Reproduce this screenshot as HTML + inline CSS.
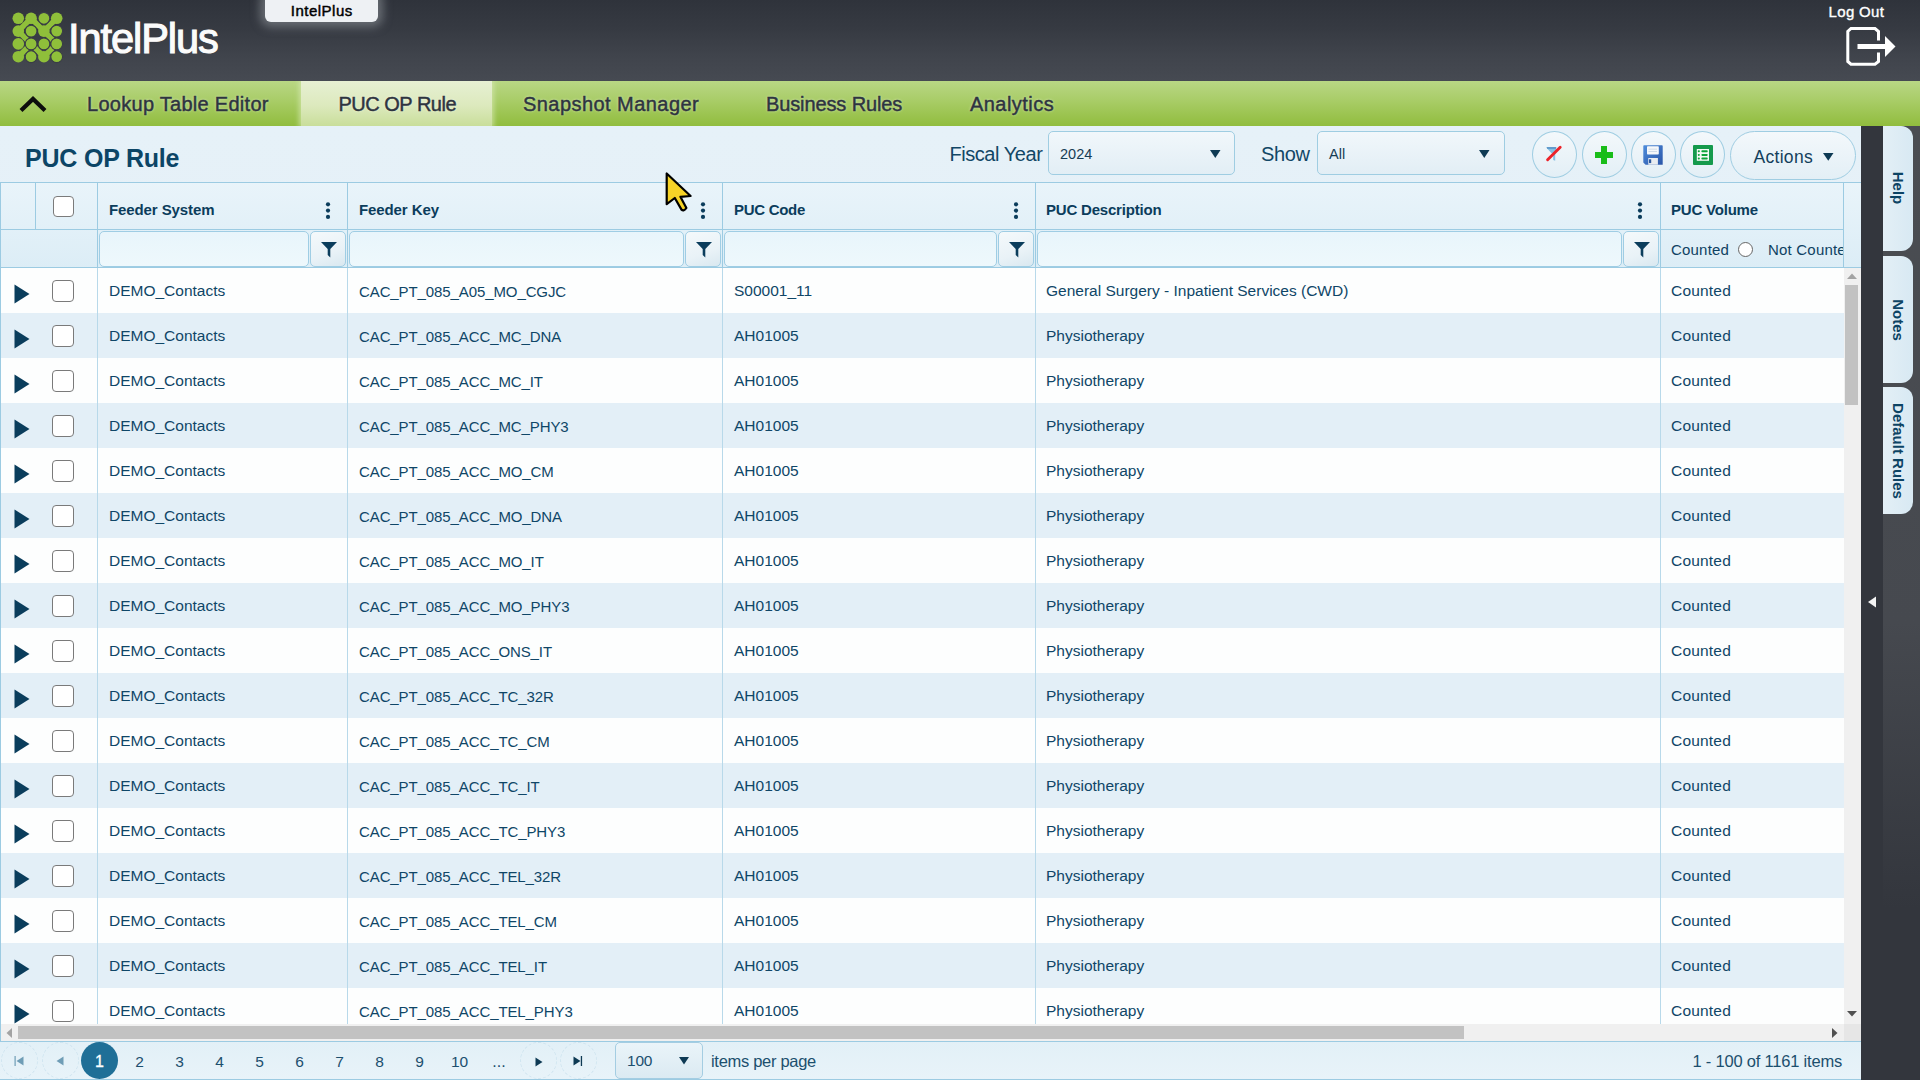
<!DOCTYPE html>
<html><head><meta charset="utf-8"><title>PUC OP Rule</title>
<style>
html,body{margin:0;padding:0;width:1920px;height:1080px;overflow:hidden;background:#e3eff6;font-family:'Liberation Sans', sans-serif}
.t{position:absolute;line-height:0;white-space:nowrap;font-family:'Liberation Sans', sans-serif}
</style></head><body>
<div style='position:absolute;left:0px;top:0px;width:1920px;height:81px;background:linear-gradient(#2f333b 0%,#363a42 35%,#40444c 70%,#464a52 100%)'></div><svg style='position:absolute;left:10px;top:10px' width='56' height='56' viewBox='10 10 56 56'><line x1='31.1' y1='18.3' x2='18.3' y2='31.1' stroke='#8fbf3a' stroke-width='5.5'/><line x1='31.1' y1='18.3' x2='43.9' y2='31.1' stroke='#8fbf3a' stroke-width='5.5'/><line x1='43.9' y1='31.1' x2='56.7' y2='18.3' stroke='#8fbf3a' stroke-width='5.5'/><line x1='18.3' y1='31.1' x2='31.1' y2='43.9' stroke='#8fbf3a' stroke-width='5.5'/><line x1='43.9' y1='31.1' x2='56.7' y2='43.9' stroke='#8fbf3a' stroke-width='5.5'/><line x1='18.3' y1='56.7' x2='31.1' y2='43.9' stroke='#8fbf3a' stroke-width='5.5'/><line x1='31.1' y1='43.9' x2='43.9' y2='56.7' stroke='#8fbf3a' stroke-width='5.5'/><line x1='43.9' y1='56.7' x2='56.7' y2='43.9' stroke='#8fbf3a' stroke-width='5.5'/><circle cx='18.3' cy='18.3' r='5.8' fill='#8fbf3a'/><circle cx='31.1' cy='18.3' r='5.8' fill='#8fbf3a'/><circle cx='43.9' cy='18.3' r='5.9' fill='#8fbf3a' stroke='#3a3e46' stroke-width='1.1'/><circle cx='56.7' cy='18.3' r='5.8' fill='#8fbf3a'/><circle cx='18.3' cy='31.1' r='5.8' fill='#8fbf3a'/><circle cx='31.1' cy='31.1' r='5.9' fill='#8fbf3a' stroke='#3a3e46' stroke-width='1.1'/><circle cx='43.9' cy='31.1' r='5.8' fill='#8fbf3a'/><circle cx='56.7' cy='31.1' r='5.9' fill='#8fbf3a' stroke='#3a3e46' stroke-width='1.1'/><circle cx='18.3' cy='43.9' r='5.8' fill='#8fbf3a'/><circle cx='31.1' cy='43.9' r='5.9' fill='#8fbf3a' stroke='#3a3e46' stroke-width='1.1'/><circle cx='43.9' cy='43.9' r='5.9' fill='#8fbf3a' stroke='#3a3e46' stroke-width='1.1'/><circle cx='56.7' cy='43.9' r='5.9' fill='#8fbf3a' stroke='#3a3e46' stroke-width='1.1'/><circle cx='18.3' cy='56.7' r='5.8' fill='#8fbf3a'/><circle cx='31.1' cy='56.7' r='5.9' fill='#8fbf3a' stroke='#3a3e46' stroke-width='1.1'/><circle cx='43.9' cy='56.7' r='5.8' fill='#8fbf3a'/><circle cx='56.7' cy='56.7' r='5.9' fill='#8fbf3a' stroke='#3a3e46' stroke-width='1.1'/></svg><div class='t' style='left:67.5px;top:38.9px;font-size:42px;color:#fbfbfb;font-weight:normal;letter-spacing:-1.1px;-webkit-text-stroke:1.1px #fbfbfb;transform:scaleX(0.99);transform-origin:0 0'>IntelPlus</div><div style='position:absolute;left:265px;top:-6px;width:113px;height:28px;background:#eef1f4;border-radius:6px;box-shadow:0 0 10px 5px rgba(150,155,160,0.55)'></div><div class='t' style='left:21.80000000000001px;width:600px;text-align:center;top:11.4px;font-size:15px;color:#000;font-weight:normal;letter-spacing:0.5px;-webkit-text-stroke:0.45px #000'>IntelPlus</div><div class='t' style='left:1828.5px;top:11.8px;font-size:15px;color:#fff;font-weight:normal;letter-spacing:0.35px;-webkit-text-stroke:0.35px #fff'>Log Out</div><svg style='position:absolute;left:1840px;top:22px' width='60' height='50' viewBox='1840 22 60 50'><path d='M1878.5,40.5 V31.5 L1875,28.5 H1851 L1847.8,31.5 V61.5 L1851,64.2 H1875 L1878.5,61.5 V52.5' fill='none' stroke='#fff' stroke-width='3'/><rect x='1857.5' y='44' width='28' height='5' fill='#fff'/><path d='M1885,36 L1895.5,46.5 L1885,57 Z' fill='#fff'/></svg><div style='position:absolute;left:0px;top:81px;width:1920px;height:45px;background:linear-gradient(#b9d785 0%,#a8cc66 45%,#91bd3e 100%)'></div><div style='position:absolute;left:0;top:81px;width:1920px;height:45px;overflow:hidden'><div style='position:absolute;left:301px;top:0px;width:191px;height:45px;background:linear-gradient(#e7f0d3 0%,#dce9bd 55%,#c9de9a 100%);box-shadow:0 0 5px 2px rgba(215,232,180,0.7)'></div></div><svg style='position:absolute;left:17px;top:93px' width='32' height='22' viewBox='0 0 32 22'><path d='M4,17.5 L16,6 L28,17.5' fill='none' stroke='#0d0d0d' stroke-width='4.2'/></svg><div class='t' style='left:87px;top:103.6px;font-size:20px;color:#2e3440;font-weight:normal;letter-spacing:0.28px;text-shadow:0 0 3px rgba(255,255,255,0.6);-webkit-text-stroke:0.45px #2e3440'>Lookup Table Editor</div><div class='t' style='left:338.5px;top:103.6px;font-size:20px;color:#2e3440;font-weight:normal;letter-spacing:-0.5px;text-shadow:0 0 3px rgba(255,255,255,0.6);-webkit-text-stroke:0.45px #2e3440'>PUC OP Rule</div><div class='t' style='left:523px;top:103.6px;font-size:20px;color:#2e3440;font-weight:normal;letter-spacing:0.45px;text-shadow:0 0 3px rgba(255,255,255,0.6);-webkit-text-stroke:0.45px #2e3440'>Snapshot Manager</div><div class='t' style='left:766px;top:103.6px;font-size:20px;color:#2e3440;font-weight:normal;letter-spacing:-0.12px;text-shadow:0 0 3px rgba(255,255,255,0.6);-webkit-text-stroke:0.45px #2e3440'>Business Rules</div><div class='t' style='left:970px;top:103.6px;font-size:20px;color:#2e3440;font-weight:normal;letter-spacing:0.45px;text-shadow:0 0 3px rgba(255,255,255,0.6);-webkit-text-stroke:0.45px #2e3440'>Analytics</div><div style='position:absolute;left:0px;top:126px;width:1861px;height:954px;background:linear-gradient(#e6f1f8 0%,#dfecf4 100%)'></div><div class='t' style='left:25px;top:157.8px;font-size:25px;color:#0c4566;font-weight:bold;letter-spacing:-0.2px'>PUC OP Rule</div><div class='t' style='left:949.5px;top:153.6px;font-size:20px;color:#124766;font-weight:normal;letter-spacing:-0.45px'>Fiscal Year</div><div style='position:absolute;left:1048px;top:131px;width:187px;height:44px;box-sizing:border-box;border:1px solid #9fcde2;border-radius:5px;background:linear-gradient(#f1f7fb,#e2eef5)'></div><div class='t' style='left:1060px;top:153.8px;font-size:14.5px;color:#173d55;font-weight:normal;'>2024</div><svg style='position:absolute;left:1210px;top:150px' width='11' height='8'><path d='M0,0 H10.5 L5.25,8 Z' fill='#0e3a54'/></svg><div class='t' style='left:1261px;top:153.6px;font-size:20px;color:#124766;font-weight:normal;letter-spacing:-0.4px'>Show</div><div style='position:absolute;left:1317px;top:131px;width:188px;height:44px;box-sizing:border-box;border:1px solid #9fcde2;border-radius:5px;background:linear-gradient(#f1f7fb,#e2eef5)'></div><div class='t' style='left:1329px;top:153.8px;font-size:14.5px;color:#173d55;font-weight:normal;'>All</div><svg style='position:absolute;left:1479px;top:150px' width='11' height='8'><path d='M0,0 H10.5 L5.25,8 Z' fill='#0e3a54'/></svg><div style='position:absolute;left:1532.0px;top:131px;width:45px;height:47px;box-sizing:border-box;border:1px solid #9fcde2;border-radius:50%;background:linear-gradient(#f3f8fb,#e3eff6)'></div><div style='position:absolute;left:1581.5px;top:131px;width:45px;height:47px;box-sizing:border-box;border:1px solid #9fcde2;border-radius:50%;background:linear-gradient(#f3f8fb,#e3eff6)'></div><div style='position:absolute;left:1630.8px;top:131px;width:45px;height:47px;box-sizing:border-box;border:1px solid #9fcde2;border-radius:50%;background:linear-gradient(#f3f8fb,#e3eff6)'></div><div style='position:absolute;left:1680.1px;top:131px;width:45px;height:47px;box-sizing:border-box;border:1px solid #9fcde2;border-radius:50%;background:linear-gradient(#f3f8fb,#e3eff6)'></div><svg style='position:absolute;left:1540px;top:140px' width='30' height='30' viewBox='1540 140 30 30'><path d='M1546,147.3 H1556.6 L1555.2,153.3 V160.8 L1553.2,160 V153.3 L1551.5,153.3 Z' fill='#86bfe2'/><rect x='1547' y='147.3' width='9' height='1.3' fill='#4a86c0'/><line x1='1547.6' y1='159.8' x2='1560.2' y2='147.3' stroke='#ec2229' stroke-width='2.9' stroke-linecap='round'/></svg><svg style='position:absolute;left:1595px;top:146px' width='18' height='18' viewBox='0 0 18 18'><path d='M6,0 H12 V6 H18 V12 H12 V18 H6 V12 H0 V6 H6 Z' fill='#19bd19'/></svg><svg style='position:absolute;left:1643px;top:145px' width='20' height='20' viewBox='0 0 20 20'><defs><linearGradient id='fg' x1='0' y1='0' x2='1' y2='1'><stop offset='0' stop-color='#4f8ddb'/><stop offset='1' stop-color='#2a55a8'/></linearGradient></defs><path d='M0.3,1 Q0.3,0.3 1,0.3 H19 Q19.7,0.3 19.7,1 V19.7 H2.6 L0.3,17.4 Z' fill='url(#fg)'/><rect x='4' y='1.2' width='11.8' height='8.4' rx='0.8' fill='#f6f8fa'/><rect x='5.5' y='3.8' width='8.5' height='0.6' fill='#b8c8dc'/><rect x='5.5' y='6' width='8.5' height='0.6' fill='#b8c8dc'/><rect x='5.3' y='13' width='9.6' height='6.7' fill='#e9edf1'/><rect x='6' y='14.3' width='2.2' height='3.8' fill='#2d5aa0'/></svg><svg style='position:absolute;left:1693px;top:145px' width='20' height='20' viewBox='0 0 20 20'><rect x='0' y='0' width='20' height='20' rx='1' fill='#159a4c'/><rect x='3.8' y='4' width='12.2' height='11.8' fill='#f4faf5'/><rect x='4.8' y='5.3' width='2' height='2' rx='0.8' fill='#0ea43a'/><rect x='8.4' y='5.3' width='6.3' height='2' rx='0.8' fill='#0ea43a'/><rect x='4.8' y='8.9' width='2' height='2' rx='0.8' fill='#0ea43a'/><rect x='8.4' y='8.9' width='6.3' height='2' rx='0.8' fill='#0ea43a'/><rect x='4.8' y='12.5' width='2' height='2' rx='0.8' fill='#0ea43a'/><rect x='8.4' y='12.5' width='6.3' height='2' rx='0.8' fill='#0ea43a'/></svg><div style='position:absolute;left:1730px;top:131px;width:126px;height:49px;box-sizing:border-box;border:1px solid #9fcde2;border-radius:25px;background:linear-gradient(#f3f8fb,#e3eff6)'></div><div class='t' style='left:1753.5px;top:156.6px;font-size:17.5px;color:#133f5c;font-weight:normal;letter-spacing:0.3px'>Actions</div><svg style='position:absolute;left:1823px;top:153px' width='11' height='8'><path d='M0,0 H10.5 L5.25,7.8 Z' fill='#0e3a54'/></svg><div style='position:absolute;left:0px;top:182px;width:1861px;height:86px;background:linear-gradient(#e9f4fa 0%,#dcedf6 100%)'></div><div style='position:absolute;left:0px;top:182px;width:1861px;height:1px;background:#9ccbe2'></div><div style='position:absolute;left:0px;top:229px;width:1861px;height:1px;background:#9ccbe2'></div><div style='position:absolute;left:0px;top:267px;width:1861px;height:1px;background:#9ccbe2'></div><div style='position:absolute;left:0px;top:182px;width:1px;height:860px;background:#9ccbe2'></div><div style='position:absolute;left:35px;top:183px;width:1px;height:46px;background:#9ccbe2'></div><div style='position:absolute;left:97px;top:183px;width:1px;height:84px;background:#9ccbe2'></div><div style='position:absolute;left:347px;top:183px;width:1px;height:84px;background:#9ccbe2'></div><div style='position:absolute;left:722px;top:183px;width:1px;height:84px;background:#9ccbe2'></div><div style='position:absolute;left:1035px;top:183px;width:1px;height:84px;background:#9ccbe2'></div><div style='position:absolute;left:1660px;top:183px;width:1px;height:84px;background:#9ccbe2'></div><div style='position:absolute;left:1843px;top:183px;width:1px;height:84px;background:#9ccbe2'></div><div style='position:absolute;left:53px;top:196px;width:21px;height:21px;box-sizing:border-box;border:1.5px solid #7b7b7b;border-radius:4px;background:#fff'></div><div class='t' style='left:109px;top:209.8px;font-size:15px;color:#0b3d5c;font-weight:bold;letter-spacing:-0.1px'>Feeder System</div><div class='t' style='left:359px;top:209.8px;font-size:15px;color:#0b3d5c;font-weight:bold;letter-spacing:-0.1px'>Feeder Key</div><div class='t' style='left:734px;top:209.8px;font-size:15px;color:#0b3d5c;font-weight:bold;letter-spacing:-0.3px'>PUC Code</div><div class='t' style='left:1046px;top:209.8px;font-size:15px;color:#0b3d5c;font-weight:bold;letter-spacing:-0.2px'>PUC Description</div><div class='t' style='left:1671px;top:209.8px;font-size:15px;color:#0b3d5c;font-weight:bold;letter-spacing:-0.2px'>PUC Volume</div><svg style='position:absolute;left:324.8px;top:201px' width='6' height='20' viewBox='0 0 6 20'><circle cx='3' cy='3.3' r='2.1' fill='#0b3d5c'/><circle cx='3' cy='9.6' r='2.1' fill='#0b3d5c'/><circle cx='3' cy='15.9' r='2.1' fill='#0b3d5c'/></svg><svg style='position:absolute;left:699.8px;top:201px' width='6' height='20' viewBox='0 0 6 20'><circle cx='3' cy='3.3' r='2.1' fill='#0b3d5c'/><circle cx='3' cy='9.6' r='2.1' fill='#0b3d5c'/><circle cx='3' cy='15.9' r='2.1' fill='#0b3d5c'/></svg><svg style='position:absolute;left:1012.8px;top:201px' width='6' height='20' viewBox='0 0 6 20'><circle cx='3' cy='3.3' r='2.1' fill='#0b3d5c'/><circle cx='3' cy='9.6' r='2.1' fill='#0b3d5c'/><circle cx='3' cy='15.9' r='2.1' fill='#0b3d5c'/></svg><svg style='position:absolute;left:1637px;top:201px' width='6' height='20' viewBox='0 0 6 20'><circle cx='3' cy='3.3' r='2.1' fill='#0b3d5c'/><circle cx='3' cy='9.6' r='2.1' fill='#0b3d5c'/><circle cx='3' cy='15.9' r='2.1' fill='#0b3d5c'/></svg><div style='position:absolute;left:99px;top:231px;width:210px;height:36px;box-sizing:border-box;border:1px solid #9fcde4;border-radius:5px;background:linear-gradient(#e8f5fb,#eef8fc)'></div><div style='position:absolute;left:310px;top:231px;width:36px;height:36px;box-sizing:border-box;border:1px solid #9fcde4;border-radius:5px;background:linear-gradient(160deg,#f4f9fb 0%,#e9f2f7 60%,#d9e8f0 100%)'></div><svg style='position:absolute;left:320.5px;top:242px' width='16' height='16' viewBox='0 0 16 16'><path d='M0,0 H16 L9.3,7 V15.5 L6.7,13 V7 Z' fill='#0b3d5c'/></svg><div style='position:absolute;left:349px;top:231px;width:335px;height:36px;box-sizing:border-box;border:1px solid #9fcde4;border-radius:5px;background:linear-gradient(#e8f5fb,#eef8fc)'></div><div style='position:absolute;left:685px;top:231px;width:36px;height:36px;box-sizing:border-box;border:1px solid #9fcde4;border-radius:5px;background:linear-gradient(160deg,#f4f9fb 0%,#e9f2f7 60%,#d9e8f0 100%)'></div><svg style='position:absolute;left:695.5px;top:242px' width='16' height='16' viewBox='0 0 16 16'><path d='M0,0 H16 L9.3,7 V15.5 L6.7,13 V7 Z' fill='#0b3d5c'/></svg><div style='position:absolute;left:724px;top:231px;width:273px;height:36px;box-sizing:border-box;border:1px solid #9fcde4;border-radius:5px;background:linear-gradient(#e8f5fb,#eef8fc)'></div><div style='position:absolute;left:998px;top:231px;width:36px;height:36px;box-sizing:border-box;border:1px solid #9fcde4;border-radius:5px;background:linear-gradient(160deg,#f4f9fb 0%,#e9f2f7 60%,#d9e8f0 100%)'></div><svg style='position:absolute;left:1008.5px;top:242px' width='16' height='16' viewBox='0 0 16 16'><path d='M0,0 H16 L9.3,7 V15.5 L6.7,13 V7 Z' fill='#0b3d5c'/></svg><div style='position:absolute;left:1037px;top:231px;width:585px;height:36px;box-sizing:border-box;border:1px solid #9fcde4;border-radius:5px;background:linear-gradient(#e8f5fb,#eef8fc)'></div><div style='position:absolute;left:1623px;top:231px;width:36px;height:36px;box-sizing:border-box;border:1px solid #9fcde4;border-radius:5px;background:linear-gradient(160deg,#f4f9fb 0%,#e9f2f7 60%,#d9e8f0 100%)'></div><svg style='position:absolute;left:1633.5px;top:242px' width='16' height='16' viewBox='0 0 16 16'><path d='M0,0 H16 L9.3,7 V15.5 L6.7,13 V7 Z' fill='#0b3d5c'/></svg><div class='t' style='left:1671px;top:249.8px;font-size:15px;color:#0f4262;font-weight:normal;letter-spacing:0.2px'>Counted</div><div style='position:absolute;left:1738px;top:242px;width:15px;height:15px;box-sizing:border-box;border:1.3px solid #666;border-radius:50%;background:#fff'></div><div style='position:absolute;left:1760px;top:235px;width:83px;height:30px;overflow:hidden'><div class='t' style='left:8px;top:14.8px;font-size:15px;color:#0f4262;font-weight:normal;letter-spacing:0.2px'>Not Counted</div></div><div style='position:absolute;left:1844px;top:183px;width:17px;height:84px;background:linear-gradient(#e9f4fa 0%,#dcedf6 100%)'></div><div style='position:absolute;left:1843px;top:183px;width:1px;height:84px;background:#9ccbe2'></div><div style='position:absolute;left:1px;top:268px;width:1843px;height:756px;overflow:hidden'><div style='position:absolute;left:0;top:0px;width:1843px;height:45px;background:#fdfefe'></div><svg style='position:absolute;left:13px;top:15.5px' width='16' height='20' viewBox='0 0 16 20'><path d='M0.5,0.5 L15.5,10 L0.5,19.5 Z' fill='#0a3d5c'/></svg><div style='position:absolute;left:51px;top:12px;width:22px;height:22px;box-sizing:border-box;border:1.5px solid #7a7a7a;border-radius:4px;background:#fff'></div><div class='t' style='left:108px;top:23.3px;font-size:15.5px;color:#0f4667;letter-spacing:0px'>DEMO_Contacts</div><div class='t' style='left:358px;top:23.5px;font-size:15px;color:#0f4667;letter-spacing:-0.1px'>CAC_PT_085_A05_MO_CGJC</div><div class='t' style='left:733px;top:23.3px;font-size:15.5px;color:#0f4667;letter-spacing:0px'>S00001_11</div><div class='t' style='left:1045px;top:23.3px;font-size:15.5px;color:#0f4667;letter-spacing:0px'>General Surgery - Inpatient Services (CWD)</div><div class='t' style='left:1670px;top:23.3px;font-size:15.5px;color:#0f4667;letter-spacing:0.2px'>Counted</div><div style='position:absolute;left:0;top:45px;width:1843px;height:45px;background:#e3eff7'></div><svg style='position:absolute;left:13px;top:60.5px' width='16' height='20' viewBox='0 0 16 20'><path d='M0.5,0.5 L15.5,10 L0.5,19.5 Z' fill='#0a3d5c'/></svg><div style='position:absolute;left:51px;top:57px;width:22px;height:22px;box-sizing:border-box;border:1.5px solid #7a7a7a;border-radius:4px;background:#fff'></div><div class='t' style='left:108px;top:68.3px;font-size:15.5px;color:#0f4667;letter-spacing:0px'>DEMO_Contacts</div><div class='t' style='left:358px;top:68.5px;font-size:15px;color:#0f4667;letter-spacing:-0.1px'>CAC_PT_085_ACC_MC_DNA</div><div class='t' style='left:733px;top:68.3px;font-size:15.5px;color:#0f4667;letter-spacing:0px'>AH01005</div><div class='t' style='left:1045px;top:68.3px;font-size:15.5px;color:#0f4667;letter-spacing:0px'>Physiotherapy</div><div class='t' style='left:1670px;top:68.3px;font-size:15.5px;color:#0f4667;letter-spacing:0.2px'>Counted</div><div style='position:absolute;left:0;top:90px;width:1843px;height:45px;background:#fdfefe'></div><svg style='position:absolute;left:13px;top:105.5px' width='16' height='20' viewBox='0 0 16 20'><path d='M0.5,0.5 L15.5,10 L0.5,19.5 Z' fill='#0a3d5c'/></svg><div style='position:absolute;left:51px;top:102px;width:22px;height:22px;box-sizing:border-box;border:1.5px solid #7a7a7a;border-radius:4px;background:#fff'></div><div class='t' style='left:108px;top:113.3px;font-size:15.5px;color:#0f4667;letter-spacing:0px'>DEMO_Contacts</div><div class='t' style='left:358px;top:113.5px;font-size:15px;color:#0f4667;letter-spacing:-0.1px'>CAC_PT_085_ACC_MC_IT</div><div class='t' style='left:733px;top:113.3px;font-size:15.5px;color:#0f4667;letter-spacing:0px'>AH01005</div><div class='t' style='left:1045px;top:113.3px;font-size:15.5px;color:#0f4667;letter-spacing:0px'>Physiotherapy</div><div class='t' style='left:1670px;top:113.3px;font-size:15.5px;color:#0f4667;letter-spacing:0.2px'>Counted</div><div style='position:absolute;left:0;top:135px;width:1843px;height:45px;background:#e3eff7'></div><svg style='position:absolute;left:13px;top:150.5px' width='16' height='20' viewBox='0 0 16 20'><path d='M0.5,0.5 L15.5,10 L0.5,19.5 Z' fill='#0a3d5c'/></svg><div style='position:absolute;left:51px;top:147px;width:22px;height:22px;box-sizing:border-box;border:1.5px solid #7a7a7a;border-radius:4px;background:#fff'></div><div class='t' style='left:108px;top:158.3px;font-size:15.5px;color:#0f4667;letter-spacing:0px'>DEMO_Contacts</div><div class='t' style='left:358px;top:158.5px;font-size:15px;color:#0f4667;letter-spacing:-0.1px'>CAC_PT_085_ACC_MC_PHY3</div><div class='t' style='left:733px;top:158.3px;font-size:15.5px;color:#0f4667;letter-spacing:0px'>AH01005</div><div class='t' style='left:1045px;top:158.3px;font-size:15.5px;color:#0f4667;letter-spacing:0px'>Physiotherapy</div><div class='t' style='left:1670px;top:158.3px;font-size:15.5px;color:#0f4667;letter-spacing:0.2px'>Counted</div><div style='position:absolute;left:0;top:180px;width:1843px;height:45px;background:#fdfefe'></div><svg style='position:absolute;left:13px;top:195.5px' width='16' height='20' viewBox='0 0 16 20'><path d='M0.5,0.5 L15.5,10 L0.5,19.5 Z' fill='#0a3d5c'/></svg><div style='position:absolute;left:51px;top:192px;width:22px;height:22px;box-sizing:border-box;border:1.5px solid #7a7a7a;border-radius:4px;background:#fff'></div><div class='t' style='left:108px;top:203.3px;font-size:15.5px;color:#0f4667;letter-spacing:0px'>DEMO_Contacts</div><div class='t' style='left:358px;top:203.5px;font-size:15px;color:#0f4667;letter-spacing:-0.1px'>CAC_PT_085_ACC_MO_CM</div><div class='t' style='left:733px;top:203.3px;font-size:15.5px;color:#0f4667;letter-spacing:0px'>AH01005</div><div class='t' style='left:1045px;top:203.3px;font-size:15.5px;color:#0f4667;letter-spacing:0px'>Physiotherapy</div><div class='t' style='left:1670px;top:203.3px;font-size:15.5px;color:#0f4667;letter-spacing:0.2px'>Counted</div><div style='position:absolute;left:0;top:225px;width:1843px;height:45px;background:#e3eff7'></div><svg style='position:absolute;left:13px;top:240.5px' width='16' height='20' viewBox='0 0 16 20'><path d='M0.5,0.5 L15.5,10 L0.5,19.5 Z' fill='#0a3d5c'/></svg><div style='position:absolute;left:51px;top:237px;width:22px;height:22px;box-sizing:border-box;border:1.5px solid #7a7a7a;border-radius:4px;background:#fff'></div><div class='t' style='left:108px;top:248.3px;font-size:15.5px;color:#0f4667;letter-spacing:0px'>DEMO_Contacts</div><div class='t' style='left:358px;top:248.5px;font-size:15px;color:#0f4667;letter-spacing:-0.1px'>CAC_PT_085_ACC_MO_DNA</div><div class='t' style='left:733px;top:248.3px;font-size:15.5px;color:#0f4667;letter-spacing:0px'>AH01005</div><div class='t' style='left:1045px;top:248.3px;font-size:15.5px;color:#0f4667;letter-spacing:0px'>Physiotherapy</div><div class='t' style='left:1670px;top:248.3px;font-size:15.5px;color:#0f4667;letter-spacing:0.2px'>Counted</div><div style='position:absolute;left:0;top:270px;width:1843px;height:45px;background:#fdfefe'></div><svg style='position:absolute;left:13px;top:285.5px' width='16' height='20' viewBox='0 0 16 20'><path d='M0.5,0.5 L15.5,10 L0.5,19.5 Z' fill='#0a3d5c'/></svg><div style='position:absolute;left:51px;top:282px;width:22px;height:22px;box-sizing:border-box;border:1.5px solid #7a7a7a;border-radius:4px;background:#fff'></div><div class='t' style='left:108px;top:293.3px;font-size:15.5px;color:#0f4667;letter-spacing:0px'>DEMO_Contacts</div><div class='t' style='left:358px;top:293.5px;font-size:15px;color:#0f4667;letter-spacing:-0.1px'>CAC_PT_085_ACC_MO_IT</div><div class='t' style='left:733px;top:293.3px;font-size:15.5px;color:#0f4667;letter-spacing:0px'>AH01005</div><div class='t' style='left:1045px;top:293.3px;font-size:15.5px;color:#0f4667;letter-spacing:0px'>Physiotherapy</div><div class='t' style='left:1670px;top:293.3px;font-size:15.5px;color:#0f4667;letter-spacing:0.2px'>Counted</div><div style='position:absolute;left:0;top:315px;width:1843px;height:45px;background:#e3eff7'></div><svg style='position:absolute;left:13px;top:330.5px' width='16' height='20' viewBox='0 0 16 20'><path d='M0.5,0.5 L15.5,10 L0.5,19.5 Z' fill='#0a3d5c'/></svg><div style='position:absolute;left:51px;top:327px;width:22px;height:22px;box-sizing:border-box;border:1.5px solid #7a7a7a;border-radius:4px;background:#fff'></div><div class='t' style='left:108px;top:338.3px;font-size:15.5px;color:#0f4667;letter-spacing:0px'>DEMO_Contacts</div><div class='t' style='left:358px;top:338.5px;font-size:15px;color:#0f4667;letter-spacing:-0.1px'>CAC_PT_085_ACC_MO_PHY3</div><div class='t' style='left:733px;top:338.3px;font-size:15.5px;color:#0f4667;letter-spacing:0px'>AH01005</div><div class='t' style='left:1045px;top:338.3px;font-size:15.5px;color:#0f4667;letter-spacing:0px'>Physiotherapy</div><div class='t' style='left:1670px;top:338.3px;font-size:15.5px;color:#0f4667;letter-spacing:0.2px'>Counted</div><div style='position:absolute;left:0;top:360px;width:1843px;height:45px;background:#fdfefe'></div><svg style='position:absolute;left:13px;top:375.5px' width='16' height='20' viewBox='0 0 16 20'><path d='M0.5,0.5 L15.5,10 L0.5,19.5 Z' fill='#0a3d5c'/></svg><div style='position:absolute;left:51px;top:372px;width:22px;height:22px;box-sizing:border-box;border:1.5px solid #7a7a7a;border-radius:4px;background:#fff'></div><div class='t' style='left:108px;top:383.3px;font-size:15.5px;color:#0f4667;letter-spacing:0px'>DEMO_Contacts</div><div class='t' style='left:358px;top:383.5px;font-size:15px;color:#0f4667;letter-spacing:-0.1px'>CAC_PT_085_ACC_ONS_IT</div><div class='t' style='left:733px;top:383.3px;font-size:15.5px;color:#0f4667;letter-spacing:0px'>AH01005</div><div class='t' style='left:1045px;top:383.3px;font-size:15.5px;color:#0f4667;letter-spacing:0px'>Physiotherapy</div><div class='t' style='left:1670px;top:383.3px;font-size:15.5px;color:#0f4667;letter-spacing:0.2px'>Counted</div><div style='position:absolute;left:0;top:405px;width:1843px;height:45px;background:#e3eff7'></div><svg style='position:absolute;left:13px;top:420.5px' width='16' height='20' viewBox='0 0 16 20'><path d='M0.5,0.5 L15.5,10 L0.5,19.5 Z' fill='#0a3d5c'/></svg><div style='position:absolute;left:51px;top:417px;width:22px;height:22px;box-sizing:border-box;border:1.5px solid #7a7a7a;border-radius:4px;background:#fff'></div><div class='t' style='left:108px;top:428.3px;font-size:15.5px;color:#0f4667;letter-spacing:0px'>DEMO_Contacts</div><div class='t' style='left:358px;top:428.5px;font-size:15px;color:#0f4667;letter-spacing:-0.1px'>CAC_PT_085_ACC_TC_32R</div><div class='t' style='left:733px;top:428.3px;font-size:15.5px;color:#0f4667;letter-spacing:0px'>AH01005</div><div class='t' style='left:1045px;top:428.3px;font-size:15.5px;color:#0f4667;letter-spacing:0px'>Physiotherapy</div><div class='t' style='left:1670px;top:428.3px;font-size:15.5px;color:#0f4667;letter-spacing:0.2px'>Counted</div><div style='position:absolute;left:0;top:450px;width:1843px;height:45px;background:#fdfefe'></div><svg style='position:absolute;left:13px;top:465.5px' width='16' height='20' viewBox='0 0 16 20'><path d='M0.5,0.5 L15.5,10 L0.5,19.5 Z' fill='#0a3d5c'/></svg><div style='position:absolute;left:51px;top:462px;width:22px;height:22px;box-sizing:border-box;border:1.5px solid #7a7a7a;border-radius:4px;background:#fff'></div><div class='t' style='left:108px;top:473.3px;font-size:15.5px;color:#0f4667;letter-spacing:0px'>DEMO_Contacts</div><div class='t' style='left:358px;top:473.5px;font-size:15px;color:#0f4667;letter-spacing:-0.1px'>CAC_PT_085_ACC_TC_CM</div><div class='t' style='left:733px;top:473.3px;font-size:15.5px;color:#0f4667;letter-spacing:0px'>AH01005</div><div class='t' style='left:1045px;top:473.3px;font-size:15.5px;color:#0f4667;letter-spacing:0px'>Physiotherapy</div><div class='t' style='left:1670px;top:473.3px;font-size:15.5px;color:#0f4667;letter-spacing:0.2px'>Counted</div><div style='position:absolute;left:0;top:495px;width:1843px;height:45px;background:#e3eff7'></div><svg style='position:absolute;left:13px;top:510.5px' width='16' height='20' viewBox='0 0 16 20'><path d='M0.5,0.5 L15.5,10 L0.5,19.5 Z' fill='#0a3d5c'/></svg><div style='position:absolute;left:51px;top:507px;width:22px;height:22px;box-sizing:border-box;border:1.5px solid #7a7a7a;border-radius:4px;background:#fff'></div><div class='t' style='left:108px;top:518.3px;font-size:15.5px;color:#0f4667;letter-spacing:0px'>DEMO_Contacts</div><div class='t' style='left:358px;top:518.5px;font-size:15px;color:#0f4667;letter-spacing:-0.1px'>CAC_PT_085_ACC_TC_IT</div><div class='t' style='left:733px;top:518.3px;font-size:15.5px;color:#0f4667;letter-spacing:0px'>AH01005</div><div class='t' style='left:1045px;top:518.3px;font-size:15.5px;color:#0f4667;letter-spacing:0px'>Physiotherapy</div><div class='t' style='left:1670px;top:518.3px;font-size:15.5px;color:#0f4667;letter-spacing:0.2px'>Counted</div><div style='position:absolute;left:0;top:540px;width:1843px;height:45px;background:#fdfefe'></div><svg style='position:absolute;left:13px;top:555.5px' width='16' height='20' viewBox='0 0 16 20'><path d='M0.5,0.5 L15.5,10 L0.5,19.5 Z' fill='#0a3d5c'/></svg><div style='position:absolute;left:51px;top:552px;width:22px;height:22px;box-sizing:border-box;border:1.5px solid #7a7a7a;border-radius:4px;background:#fff'></div><div class='t' style='left:108px;top:563.3px;font-size:15.5px;color:#0f4667;letter-spacing:0px'>DEMO_Contacts</div><div class='t' style='left:358px;top:563.5px;font-size:15px;color:#0f4667;letter-spacing:-0.1px'>CAC_PT_085_ACC_TC_PHY3</div><div class='t' style='left:733px;top:563.3px;font-size:15.5px;color:#0f4667;letter-spacing:0px'>AH01005</div><div class='t' style='left:1045px;top:563.3px;font-size:15.5px;color:#0f4667;letter-spacing:0px'>Physiotherapy</div><div class='t' style='left:1670px;top:563.3px;font-size:15.5px;color:#0f4667;letter-spacing:0.2px'>Counted</div><div style='position:absolute;left:0;top:585px;width:1843px;height:45px;background:#e3eff7'></div><svg style='position:absolute;left:13px;top:600.5px' width='16' height='20' viewBox='0 0 16 20'><path d='M0.5,0.5 L15.5,10 L0.5,19.5 Z' fill='#0a3d5c'/></svg><div style='position:absolute;left:51px;top:597px;width:22px;height:22px;box-sizing:border-box;border:1.5px solid #7a7a7a;border-radius:4px;background:#fff'></div><div class='t' style='left:108px;top:608.3px;font-size:15.5px;color:#0f4667;letter-spacing:0px'>DEMO_Contacts</div><div class='t' style='left:358px;top:608.5px;font-size:15px;color:#0f4667;letter-spacing:-0.1px'>CAC_PT_085_ACC_TEL_32R</div><div class='t' style='left:733px;top:608.3px;font-size:15.5px;color:#0f4667;letter-spacing:0px'>AH01005</div><div class='t' style='left:1045px;top:608.3px;font-size:15.5px;color:#0f4667;letter-spacing:0px'>Physiotherapy</div><div class='t' style='left:1670px;top:608.3px;font-size:15.5px;color:#0f4667;letter-spacing:0.2px'>Counted</div><div style='position:absolute;left:0;top:630px;width:1843px;height:45px;background:#fdfefe'></div><svg style='position:absolute;left:13px;top:645.5px' width='16' height='20' viewBox='0 0 16 20'><path d='M0.5,0.5 L15.5,10 L0.5,19.5 Z' fill='#0a3d5c'/></svg><div style='position:absolute;left:51px;top:642px;width:22px;height:22px;box-sizing:border-box;border:1.5px solid #7a7a7a;border-radius:4px;background:#fff'></div><div class='t' style='left:108px;top:653.3px;font-size:15.5px;color:#0f4667;letter-spacing:0px'>DEMO_Contacts</div><div class='t' style='left:358px;top:653.5px;font-size:15px;color:#0f4667;letter-spacing:-0.1px'>CAC_PT_085_ACC_TEL_CM</div><div class='t' style='left:733px;top:653.3px;font-size:15.5px;color:#0f4667;letter-spacing:0px'>AH01005</div><div class='t' style='left:1045px;top:653.3px;font-size:15.5px;color:#0f4667;letter-spacing:0px'>Physiotherapy</div><div class='t' style='left:1670px;top:653.3px;font-size:15.5px;color:#0f4667;letter-spacing:0.2px'>Counted</div><div style='position:absolute;left:0;top:675px;width:1843px;height:45px;background:#e3eff7'></div><svg style='position:absolute;left:13px;top:690.5px' width='16' height='20' viewBox='0 0 16 20'><path d='M0.5,0.5 L15.5,10 L0.5,19.5 Z' fill='#0a3d5c'/></svg><div style='position:absolute;left:51px;top:687px;width:22px;height:22px;box-sizing:border-box;border:1.5px solid #7a7a7a;border-radius:4px;background:#fff'></div><div class='t' style='left:108px;top:698.3px;font-size:15.5px;color:#0f4667;letter-spacing:0px'>DEMO_Contacts</div><div class='t' style='left:358px;top:698.5px;font-size:15px;color:#0f4667;letter-spacing:-0.1px'>CAC_PT_085_ACC_TEL_IT</div><div class='t' style='left:733px;top:698.3px;font-size:15.5px;color:#0f4667;letter-spacing:0px'>AH01005</div><div class='t' style='left:1045px;top:698.3px;font-size:15.5px;color:#0f4667;letter-spacing:0px'>Physiotherapy</div><div class='t' style='left:1670px;top:698.3px;font-size:15.5px;color:#0f4667;letter-spacing:0.2px'>Counted</div><div style='position:absolute;left:0;top:720px;width:1843px;height:45px;background:#fdfefe'></div><svg style='position:absolute;left:13px;top:735.5px' width='16' height='20' viewBox='0 0 16 20'><path d='M0.5,0.5 L15.5,10 L0.5,19.5 Z' fill='#0a3d5c'/></svg><div style='position:absolute;left:51px;top:732px;width:22px;height:22px;box-sizing:border-box;border:1.5px solid #7a7a7a;border-radius:4px;background:#fff'></div><div class='t' style='left:108px;top:743.3px;font-size:15.5px;color:#0f4667;letter-spacing:0px'>DEMO_Contacts</div><div class='t' style='left:358px;top:743.5px;font-size:15px;color:#0f4667;letter-spacing:-0.1px'>CAC_PT_085_ACC_TEL_PHY3</div><div class='t' style='left:733px;top:743.3px;font-size:15.5px;color:#0f4667;letter-spacing:0px'>AH01005</div><div class='t' style='left:1045px;top:743.3px;font-size:15.5px;color:#0f4667;letter-spacing:0px'>Physiotherapy</div><div class='t' style='left:1670px;top:743.3px;font-size:15.5px;color:#0f4667;letter-spacing:0.2px'>Counted</div><div style='position:absolute;left:96px;top:0;width:1px;height:756px;background:#b8d9ea'></div><div style='position:absolute;left:346px;top:0;width:1px;height:756px;background:#b8d9ea'></div><div style='position:absolute;left:721px;top:0;width:1px;height:756px;background:#b8d9ea'></div><div style='position:absolute;left:1034px;top:0;width:1px;height:756px;background:#b8d9ea'></div><div style='position:absolute;left:1659px;top:0;width:1px;height:756px;background:#b8d9ea'></div></div><div style='position:absolute;left:1844px;top:268px;width:17px;height:756px;background:#f0f0f0'></div><svg style='position:absolute;left:1847px;top:273px' width='10' height='6'><path d='M0,6 L5,0.5 L10,6 Z' fill='#a3a3a3'/></svg><div style='position:absolute;left:1845px;top:285px;width:13px;height:120px;background:#c2c2c2'></div><svg style='position:absolute;left:1847px;top:1011px' width='10' height='6'><path d='M0,0 L10,0 L5,5.5 Z' fill='#505050'/></svg><div style='position:absolute;left:1px;top:1024px;width:1843px;height:17px;background:#f0f0f0'></div><svg style='position:absolute;left:6px;top:1028px' width='6' height='10'><path d='M6,0 V10 L0.5,5 Z' fill='#a3a3a3'/></svg><div style='position:absolute;left:18px;top:1026px;width:1446px;height:13px;background:#c2c2c2'></div><svg style='position:absolute;left:1832px;top:1028px' width='6' height='10'><path d='M0,0 V10 L5.5,5 Z' fill='#505050'/></svg><div style='position:absolute;left:1844px;top:1024px;width:17px;height:17px;background:#e6e6e6'></div><div style='position:absolute;left:0px;top:1041px;width:1861px;height:39px;background:linear-gradient(#e2f0f7,#e8f3f9)'></div><div style='position:absolute;left:0px;top:1041px;width:1861px;height:1px;background:#9ccbe2'></div><div style='position:absolute;left:0px;top:1079px;width:1861px;height:1px;background:#9ccbe2'></div><div style='position:absolute;left:0.5px;top:1042px;width:37px;height:37px;box-sizing:border-box;border:1px dashed rgba(170,205,225,0.35);border-radius:50%'></div><div style='position:absolute;left:41.5px;top:1042px;width:37px;height:37px;box-sizing:border-box;border:1px dashed rgba(170,205,225,0.35);border-radius:50%'></div><div style='position:absolute;left:519.5px;top:1042px;width:37px;height:37px;box-sizing:border-box;border:1px dashed rgba(170,205,225,0.35);border-radius:50%'></div><div style='position:absolute;left:559.5px;top:1042px;width:37px;height:37px;box-sizing:border-box;border:1px dashed rgba(170,205,225,0.35);border-radius:50%'></div><svg style='position:absolute;left:14px;top:1055px' width='11' height='12' viewBox='0 0 11 12'><rect x='0.5' y='1' width='1.2' height='10' fill='#6f9db6'/><path d='M9.5,1.5 V10.5 L2.5,6 Z' fill='#6f9db6'/></svg><svg style='position:absolute;left:55px;top:1055px' width='10' height='12' viewBox='0 0 10 12'><path d='M8.5,1.5 V10.5 L1.5,6 Z' fill='#6f9db6'/></svg><div style='position:absolute;left:81px;top:1042px;width:37px;height:37px;border-radius:50%;background:#1f6f97'></div><div class='t' style='left:-200.5px;width:600px;text-align:center;top:1061.5px;font-size:16px;color:#fff;font-weight:normal;-webkit-text-stroke:0.3px #fff'>1</div><div class='t' style='left:-160.5px;width:600px;text-align:center;top:1061.6px;font-size:15.5px;color:#1c4f6e;font-weight:normal;'>2</div><div class='t' style='left:-120.5px;width:600px;text-align:center;top:1061.6px;font-size:15.5px;color:#1c4f6e;font-weight:normal;'>3</div><div class='t' style='left:-80.5px;width:600px;text-align:center;top:1061.6px;font-size:15.5px;color:#1c4f6e;font-weight:normal;'>4</div><div class='t' style='left:-40.5px;width:600px;text-align:center;top:1061.6px;font-size:15.5px;color:#1c4f6e;font-weight:normal;'>5</div><div class='t' style='left:-0.5px;width:600px;text-align:center;top:1061.6px;font-size:15.5px;color:#1c4f6e;font-weight:normal;'>6</div><div class='t' style='left:39.5px;width:600px;text-align:center;top:1061.6px;font-size:15.5px;color:#1c4f6e;font-weight:normal;'>7</div><div class='t' style='left:79.5px;width:600px;text-align:center;top:1061.6px;font-size:15.5px;color:#1c4f6e;font-weight:normal;'>8</div><div class='t' style='left:119.5px;width:600px;text-align:center;top:1061.6px;font-size:15.5px;color:#1c4f6e;font-weight:normal;'>9</div><div class='t' style='left:159.5px;width:600px;text-align:center;top:1061.6px;font-size:15.5px;color:#1c4f6e;font-weight:normal;'>10</div><div class='t' style='left:199px;width:600px;text-align:center;top:1062.0px;font-size:16px;color:#1c4f6e;font-weight:normal;'>...</div><svg style='position:absolute;left:534px;top:1056px' width='10' height='12' viewBox='0 0 10 12'><path d='M1.5,1.5 V10.5 L8.5,6 Z' fill='#0e3a54'/></svg><svg style='position:absolute;left:572px;top:1055px' width='11' height='12' viewBox='0 0 11 12'><path d='M1.5,1.5 V10.5 L8.5,6 Z' fill='#0e3a54'/><rect x='8.8' y='1' width='1.3' height='10' fill='#0e3a54'/></svg><div style='position:absolute;left:615px;top:1042px;width:88px;height:37px;box-sizing:border-box;border:1px solid #a4cde2;border-radius:5px;background:linear-gradient(#eaf4f9,#dbeaf2)'></div><div class='t' style='left:627px;top:1060.6px;font-size:15.5px;color:#1c4f6e;font-weight:normal;letter-spacing:-0.2px'>100</div><svg style='position:absolute;left:679px;top:1057px' width='11' height='8'><path d='M0,0 H10 L5,7.5 Z' fill='#0e3a54'/></svg><div class='t' style='left:711px;top:1061.3px;font-size:16.5px;color:#1c4f6e;font-weight:normal;letter-spacing:-0.3px'>items per page</div><div class='t' style='right:78px;top:1061.3px;font-size:16.5px;color:#1c4f6e;font-weight:normal;letter-spacing:-0.2px'>1 - 100 of 1161 items</div><div style='position:absolute;left:1861px;top:126px;width:59px;height:954px;background:linear-gradient(#4a4d52 0%,#46494f 52%,#33363d 82%,#33363d 100%)'></div><div style='position:absolute;left:1861px;top:126px;width:22px;height:954px;background:#33363d'></div><div style='position:absolute;left:1883px;top:126px;width:30px;height:125px;border-radius:0 12px 12px 0;background:linear-gradient(90deg,#e3eff6,#d8e9f3)'></div><div class='t' style='left:1797.5px;top:179px;width:200px;height:18px;line-height:18px;text-align:center;font-size:15px;font-weight:bold;color:#0d4464;transform:rotate(90deg);transform-origin:100px 9px'>Help</div><div style='position:absolute;left:1883px;top:256px;width:30px;height:127px;border-radius:0 12px 12px 0;background:linear-gradient(90deg,#e3eff6,#d8e9f3)'></div><div class='t' style='left:1797.5px;top:310.5px;width:200px;height:18px;line-height:18px;text-align:center;font-size:15px;font-weight:bold;color:#0d4464;transform:rotate(90deg);transform-origin:100px 9px'>Notes</div><div style='position:absolute;left:1883px;top:387px;width:30px;height:127px;border-radius:0 12px 12px 0;background:linear-gradient(90deg,#e3eff6,#d8e9f3)'></div><div class='t' style='left:1797.5px;top:442px;width:200px;height:18px;line-height:18px;text-align:center;font-size:15px;font-weight:bold;color:#0d4464;transform:rotate(90deg);transform-origin:100px 9px'>Default Rules</div><svg style='position:absolute;left:1867px;top:596px' width='10' height='12'><path d='M9,0.5 V11.5 L1,6 Z' fill='#f4f4f4'/></svg><svg style='position:absolute;left:660px;top:168px' width='40' height='48' viewBox='660 168 40 48'><path d='M666.7,173.5 L666.7,204.2 L674.8,198 L681.5,209.6 Q683.8,211.8 686.4,208 L680.4,196.8 L690.6,196 Z' fill='#f6d327' stroke='#000' stroke-width='2.2' stroke-linejoin='round'/></svg>
</body></html>
